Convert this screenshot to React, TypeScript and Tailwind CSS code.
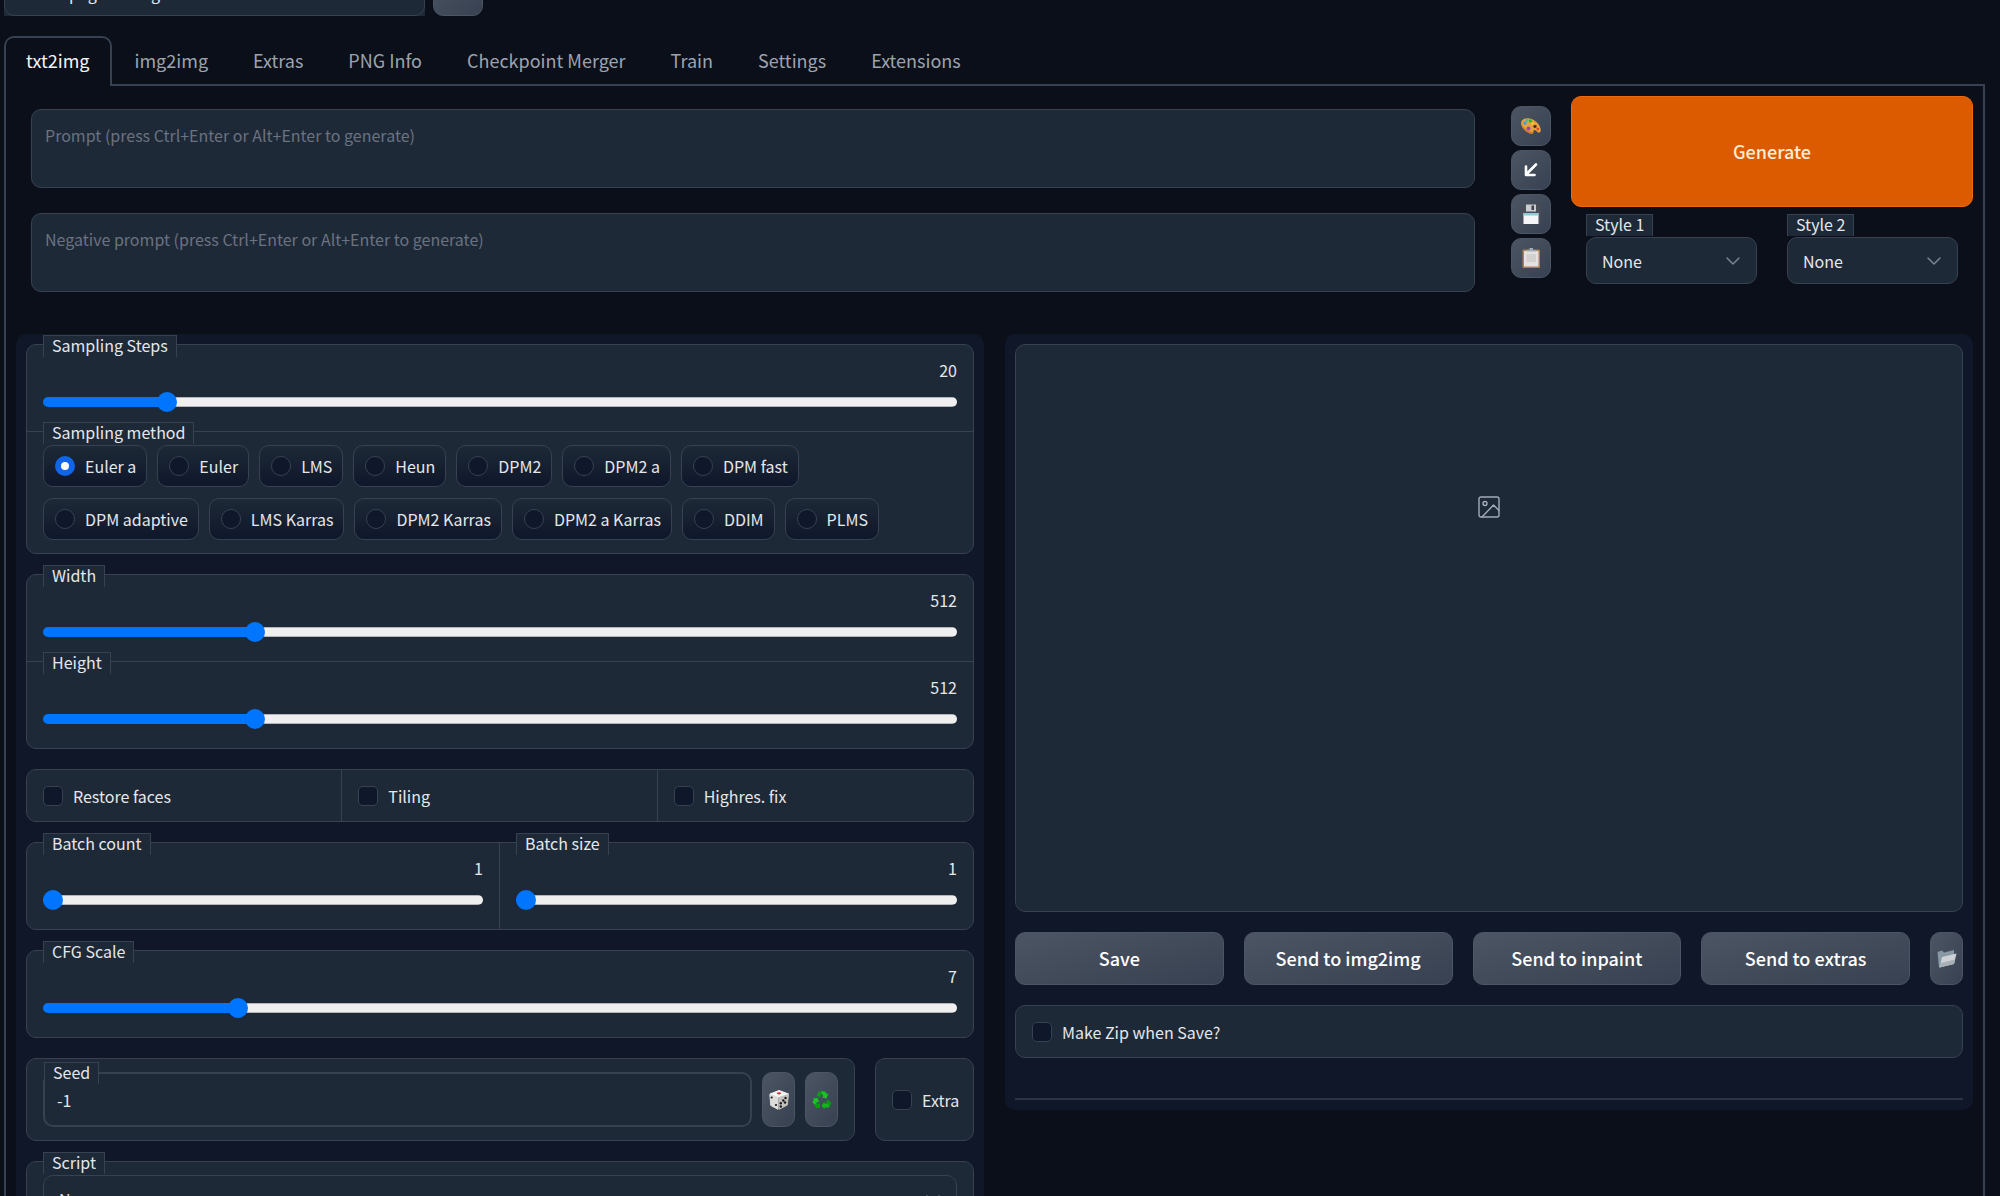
import type { ReactNode } from "react";

const TABS = [
  "txt2img",
  "img2img",
  "Extras",
  "PNG Info",
  "Checkpoint Merger",
  "Train",
  "Settings",
  "Extensions",
];

const SAMPLERS = [
  "Euler a",
  "Euler",
  "LMS",
  "Heun",
  "DPM2",
  "DPM2 a",
  "DPM fast",
  "DPM adaptive",
  "LMS Karras",
  "DPM2 Karras",
  "DPM2 a Karras",
  "DDIM",
  "PLMS",
];

const TOOL_BUTTON =
  "flex items-center justify-center rounded-[10px] border border-[#4b5563] bg-linear-to-br from-[#4b5563] to-[#374151] text-white";

function Block({ children, className = "" }: { children: ReactNode; className?: string }) {
  return (
    <div className={`rounded-[10px] border border-[#374151] bg-[#1d2937] ${className}`}>
      {children}
    </div>
  );
}

function BlockLabel({ text, htmlFor, className = "left-4" }: { text: string; htmlFor?: string; className?: string }) {
  return (
    <label
      htmlFor={htmlFor}
      className={`absolute -top-[10px] z-10 h-[22px] border border-b-0 border-[#374151] bg-[#1d2937] px-2 leading-[18px] ${className}`}
    >
      {text}
    </label>
  );
}

interface SliderProps {
  id: string;
  label: string;
  min: number;
  max: number;
  value: number;
}

function Slider({ id, label, min, max, value }: SliderProps) {
  const ratio = (value - min) / (max - min);
  // the thumb is 20px wide, so its centre runs from 10px to 100% - 10px
  const stop = `calc(10px + (100% - 20px) * ${ratio})`;

  return (
    <div className="relative px-4 pt-[13px] pb-6">
      <BlockLabel text={label} htmlFor={id} />
      <div className="text-right leading-6">{value}</div>
      <input
        id={id}
        type="range"
        min={min}
        max={max}
        defaultValue={value}
        className="mt-[15px] block h-[10px] w-full appearance-none rounded-full [&::-webkit-slider-thumb]:size-5 [&::-webkit-slider-thumb]:appearance-none [&::-webkit-slider-thumb]:rounded-full [&::-webkit-slider-thumb]:bg-[#0075ff]"
        style={{
          backgroundImage: `linear-gradient(to right, #0075ff ${stop}, transparent ${stop}), linear-gradient(to bottom, #b2b6bc 1px, #efefef 1px 9px, #b2b6bc 9px)`,
        }}
      />
    </div>
  );
}

function Checkbox({ label }: { label: string }) {
  return (
    <label className="flex h-[51px] items-center gap-[10px] px-4">
      <input
        type="checkbox"
        className="size-5 shrink-0 appearance-none rounded-[5px] border border-[#374151] bg-[#0f172a]"
      />
      {label}
    </label>
  );
}

function Dropdown({ id, value }: { id: string; value: string }) {
  return (
    <div className="relative">
      <select
        id={id}
        className="block h-[47px] w-full appearance-none rounded-[10px] border border-[#374151] bg-[#1d2937] px-[15px]"
      >
        <option>{value}</option>
      </select>
      <svg
        viewBox="0 0 14 8"
        className="pointer-events-none absolute top-5 right-[17px] h-2 w-[14px] fill-none stroke-[#7b8494] stroke-[1.5]"
      >
        <path d="M1 1l6 6 6-6" strokeLinecap="round" strokeLinejoin="round" />
      </svg>
    </div>
  );
}

function StyleSelect({ id, label }: { id: string; label: string }) {
  return (
    <div className="relative flex-1 pt-[13px]">
      <BlockLabel text={label} htmlFor={id} className="left-0" />
      <Dropdown id={id} value="None" />
    </div>
  );
}

function PaletteIcon() {
  return (
    <svg viewBox="0 0 20 20" className="size-5">
      <path
        d="M2 3.500C5 1 12 2 16 6.500C19.500 10 21 15 18.500 16.500C16.500 17.500 15.500 14 13.500 14C11.500 14 13.500 17.500 11 17.800C7.500 18 0.500 13 0.200 8C0 6 0.500 4.500 2 3.500Z"
        fill="#e8a23c"
      />
      <path d="M0.300 8C1 13 7.500 18 11 17.800C12 17.600 12.300 17 12.200 16.200C8 16.500 2.500 12.500 0.300 8Z" fill="#c9772a" />
      <ellipse cx="14" cy="10.500" rx="1.700" ry="1.400" fill="#3a3030" />
      <circle cx="4" cy="7" r="1.700" fill="#3f9be0" />
      <circle cx="6" cy="4.300" r="1.500" fill="#3cc0a0" />
      <circle cx="9.500" cy="5" r="1.700" fill="#39b52b" />
      <circle cx="7.500" cy="12.500" r="1.900" fill="#a33bb5" />
      <circle cx="16.800" cy="13" r="1.300" fill="#e0402c" />
      <circle cx="11.500" cy="7.500" r="1.200" fill="#f2d230" />
    </svg>
  );
}

function ArrowIcon() {
  return (
    <svg viewBox="0 0 20 20" className="size-5 fill-none stroke-white stroke-[2.6]">
      <path d="M15 4.500L5.500 14M5 6.500V15H13.500" strokeLinecap="round" strokeLinejoin="round" />
    </svg>
  );
}

function FloppyIcon() {
  return (
    <svg viewBox="0 0 20 20" className="size-5">
      <path d="M0.500 0.500H18L19.500 2V19.500H0.500Z" fill="#4a4f57" />
      <rect x="5" y="0.500" width="10" height="7" fill="#c9ccd0" />
      <rect x="10.500" y="1.500" width="2.500" height="4.500" fill="#3d4249" />
      <rect x="2.500" y="9" width="15" height="11" fill="#f4f6f7" />
      <rect x="2.500" y="9" width="15" height="2.500" fill="#8ccbd8" />
    </svg>
  );
}

function ClipboardIcon() {
  return (
    <svg viewBox="0 0 20 20" className="size-5">
      <rect x="1.500" y="1.500" width="17.500" height="18.500" rx="1" fill="#a97f56" />
      <rect x="3" y="3" width="14.500" height="15.500" fill="#e4e2e0" />
      <rect x="5.500" y="6" width="9.500" height="8" fill="#d3d1cf" />
      <path d="M5 3.500V2H8.500V0H12V2H15.500V3.500Z" fill="#a3abb8" />
    </svg>
  );
}

function DiceIcon() {
  return (
    <svg viewBox="0 0 20 20" className="size-5">
      <path d="M1 4L10 0.500L19.500 4L10 7.500Z" fill="#f6f5f4" stroke="#f6f5f4" strokeLinejoin="round" />
      <path d="M0.800 4.500L9 7.500V19.300L1.800 15.500Z" fill="#dedcda" stroke="#dedcda" strokeLinejoin="round" />
      <path d="M19.500 4.500L10 7.500V19.300L18.300 15Z" fill="#c3c0bd" stroke="#c3c0bd" strokeLinejoin="round" />
      <ellipse cx="10" cy="3.300" rx="2.200" ry="1.100" fill="#d6303c" />
      <circle cx="2.700" cy="7.500" r="1.100" fill="#1b1b1b" />
      <circle cx="7" cy="15" r="1.100" fill="#1b1b1b" />
      <circle cx="16.500" cy="8" r="1.200" fill="#1b1b1b" />
      <circle cx="14.300" cy="10.500" r="1.200" fill="#1b1b1b" />
      <circle cx="11.800" cy="13.200" r="1.200" fill="#1b1b1b" />
      <circle cx="16" cy="12.500" r="1.200" fill="#1b1b1b" />
      <circle cx="11.800" cy="16.500" r="1.200" fill="#1b1b1b" />
    </svg>
  );
}

function RecycleIcon() {
  return (
    <svg viewBox="0 0 20 20" className="size-5">
      <path d="M4.500 5.500L6.800 1.500H11L8 7.500Z" fill="#0a9a14" />
      <path d="M9 1.500H13L15 4.300L16.500 3.500L14.500 8.500L9.800 7.500L11.300 6.500Z" fill="#18c423" />
      <path d="M15.500 9.500L19.500 13L17.500 17L14 11.500Z" fill="#0a9a14" />
      <path d="M17.500 17.500H12.500V19.200L9.500 15.500L12.500 11.800V13.500H16Z" fill="#12b51d" />
      <path d="M8 13.500V18H4L2.500 15.500L4.500 13.500Z" fill="#0a9a14" />
      <path d="M2.500 15L0.500 12L2 9.500L0.500 8.500L5.500 8L7.500 12.500L5.800 11.700Z" fill="#18c423" />
    </svg>
  );
}

function FolderIcon() {
  return (
    <svg viewBox="0 0 20 20" className="size-5">
      <path d="M0.500 3L5 1.500L7 3.500L17 1V13L2 18.500Z" fill="#8799a2" />
      <path d="M2.500 18.500L5 8L19.500 4.500L17 15Z" fill="#cdd1d5" />
      <path d="M2.500 18.500L3.500 14L18 10.500L17 15Z" fill="#a9b0b6" />
    </svg>
  );
}

function ImageIcon() {
  return (
    <svg
      viewBox="0 0 22 22"
      className="size-[22px] fill-none stroke-[#a3abb8] stroke-[1.4]"
      strokeLinecap="round"
      strokeLinejoin="round"
    >
      <rect x="1" y="1" width="20" height="20" rx="2" />
      <circle cx="7" cy="7.500" r="2" />
      <path d="M4 21L15.500 9L21 14.500" />
    </svg>
  );
}

function CheckpointBar() {
  return (
    <div className="flex h-4 shrink-0 items-end gap-2 overflow-hidden">
      <div className="w-[421px] bg-[#1d2937]">
        <select
          aria-label="Stable Diffusion checkpoint"
          className="block h-[47px] w-full appearance-none rounded-[10px] border border-[#374151] bg-[#1d2937] px-[15px]"
        >
          <option>sdv15-peg-training</option>
        </select>
      </div>
      <button
        type="button"
        aria-label="Refresh"
        className={`h-[53px] w-[50px] shrink-0 ${TOOL_BUTTON}`}
      >
        <span className="h-5 w-4 rounded-sm bg-[#5b7488]" />
      </button>
    </div>
  );
}

function TabBar() {
  return (
    <nav className="mt-5 flex h-[50px] shrink-0 text-[18px]">
      {TABS.map((tab, index) => (
        <button
          key={tab}
          type="button"
          className={
            index === 0
              ? "rounded-t-[10px] border-2 border-b-0 border-[#374151] px-5 pb-[3px] text-[#f3f4f6]"
              : "border-b-2 border-[#374151] pr-[22px] pl-[23px] text-[#9ca3af]"
          }
        >
          {tab}
        </button>
      ))}
      <div className="flex-1 border-b-2 border-[#374151]" />
    </nav>
  );
}

function PromptRow() {
  return (
    <div className="flex pl-[15px]">
      <div className="flex flex-1 flex-col gap-[25px] pt-[13px]">
        <textarea
          aria-label="Prompt"
          placeholder="Prompt (press Ctrl+Enter or Alt+Enter to generate)"
          className="block h-[79px] w-full resize-none rounded-[10px] border border-[#374151] bg-[#1d2937] px-[13px] py-[13px] leading-6 placeholder:text-[#6b7280]"
        />
        <textarea
          aria-label="Negative prompt"
          placeholder="Negative prompt (press Ctrl+Enter or Alt+Enter to generate)"
          className="block h-[79px] w-full resize-none rounded-[10px] border border-[#374151] bg-[#1d2937] px-[13px] py-[13px] leading-6 placeholder:text-[#6b7280]"
        />
      </div>

      <div className="ml-9 flex flex-col gap-1 pt-[10px]">
        <button type="button" aria-label="Random artist" className={`size-10 ${TOOL_BUTTON}`}>
          <PaletteIcon />
        </button>
        <button type="button" aria-label="Read parameters" className={`size-10 ${TOOL_BUTTON}`}>
          <ArrowIcon />
        </button>
        <button type="button" aria-label="Save style" className={`size-10 ${TOOL_BUTTON}`}>
          <FloppyIcon />
        </button>
        <button type="button" aria-label="Apply style" className={`size-10 ${TOOL_BUTTON}`}>
          <ClipboardIcon />
        </button>
      </div>

      <div className="ml-5 w-[402px]">
        <button
          type="button"
          className="block h-[111px] w-full rounded-[10px] border border-[#ea6a0c] bg-[#dd5b00] text-[18px] font-medium text-[#ffedd5]"
        >
          Generate
        </button>
        <div className="mt-[17px] flex gap-[30px] px-[15px]">
          <StyleSelect id="style1" label="Style 1" />
          <StyleSelect id="style2" label="Style 2" />
        </div>
      </div>
    </div>
  );
}

function SettingsColumn() {
  return (
    <div className="flex flex-col gap-5 rounded-[10px] bg-[#0f1729] p-[10px]">
      <Block className="divide-y divide-[#374151]">
        <Slider id="steps" label="Sampling Steps" min={1} max={150} value={20} />
        <div className="relative px-4 py-[13px]" role="radiogroup" aria-label="Sampling method">
          <BlockLabel text="Sampling method" />
          <div className="flex flex-wrap gap-x-[10px] gap-y-[11px]">
            {SAMPLERS.map((name, index) => (
              <label
                key={name}
                className="flex h-[42px] items-center gap-[10px] rounded-[10px] border border-[#374151] bg-linear-to-b from-[#1d2937] to-[#0f172a] pr-[10px] pl-[11px]"
              >
                <input
                  type="radio"
                  name="sampler"
                  defaultChecked={index === 0}
                  className="size-5 shrink-0 appearance-none rounded-full border border-[#374151] bg-[#0f172a] checked:border-[6px] checked:border-[#1166e8] checked:bg-white"
                />
                {name}
              </label>
            ))}
          </div>
        </div>
      </Block>

      <Block className="divide-y divide-[#374151]">
        <Slider id="width" label="Width" min={64} max={2048} value={512} />
        <Slider id="height" label="Height" min={64} max={2048} value={512} />
      </Block>

      <Block className="grid grid-cols-3 divide-x divide-[#374151]">
        <Checkbox label="Restore faces" />
        <Checkbox label="Tiling" />
        <Checkbox label="Highres. fix" />
      </Block>

      <Block className="grid grid-cols-2 divide-x divide-[#374151]">
        <Slider id="batch-count" label="Batch count" min={1} max={16} value={1} />
        <Slider id="batch-size" label="Batch size" min={1} max={8} value={1} />
      </Block>

      <Block>
        <Slider id="cfg" label="CFG Scale" min={1} max={30} value={7} />
      </Block>

      <div className="flex gap-5">
        <Block className="flex flex-1 gap-[10px] px-4 py-[13px]">
          <div className="relative flex-1">
            <BlockLabel text="Seed" htmlFor="seed" className="left-px" />
            <input
              id="seed"
              type="text"
              defaultValue="-1"
              className="block h-[55px] w-full rounded-[10px] border-2 border-[#374151] bg-[#1d2937] px-3"
            />
          </div>
          <button type="button" aria-label="Random seed" className={`w-[33px] ${TOOL_BUTTON}`}>
            <DiceIcon />
          </button>
          <button type="button" aria-label="Reuse seed" className={`w-[33px] ${TOOL_BUTTON}`}>
            <RecycleIcon />
          </button>
        </Block>
        <Block className="flex w-[99px] items-center">
          <Checkbox label="Extra" />
        </Block>
      </div>

      <Block>
        <div className="relative px-4 py-[13px]">
          <BlockLabel text="Script" htmlFor="script" />
          <Dropdown id="script" value="None" />
        </div>
      </Block>
    </div>
  );
}

function OutputColumn() {
  return (
    <div className="flex flex-col gap-5 rounded-[10px] bg-[#0f1729] p-[10px]">
      <Block className="h-[568px]">
        <div className="flex h-[324px] items-center justify-center">
          <ImageIcon />
        </div>
      </Block>

      <div className="flex h-[53px] gap-5 text-[18px] font-medium">
        {["Save", "Send to img2img", "Send to inpaint", "Send to extras"].map((label) => (
          <button key={label} type="button" className={`flex-1 ${TOOL_BUTTON}`}>
            {label}
          </button>
        ))}
        <button type="button" aria-label="Open folder" className={`w-[33px] ${TOOL_BUTTON}`}>
          <FolderIcon />
        </button>
      </div>

      <Block>
        <Checkbox label="Make Zip when Save?" />
      </Block>

      <hr className="mt-5 border-t-2 border-[#2b3346]" />
    </div>
  );
}

export default function App() {
  return (
    <div className="flex h-screen flex-col overflow-hidden bg-[#0b0f19] pr-[15px] pl-1 font-['Noto_Sans_CJK_SC','Noto_Sans',sans-serif] text-[16px] text-[#e5e7eb]">
      <CheckpointBar />
      <TabBar />
      <main className="flex-1 border-x-2 border-[#374151] p-[10px]">
        <PromptRow />
        <div className="mt-[42px] grid grid-cols-2 items-start gap-[21px]">
          <SettingsColumn />
          <OutputColumn />
        </div>
      </main>
    </div>
  );
}
